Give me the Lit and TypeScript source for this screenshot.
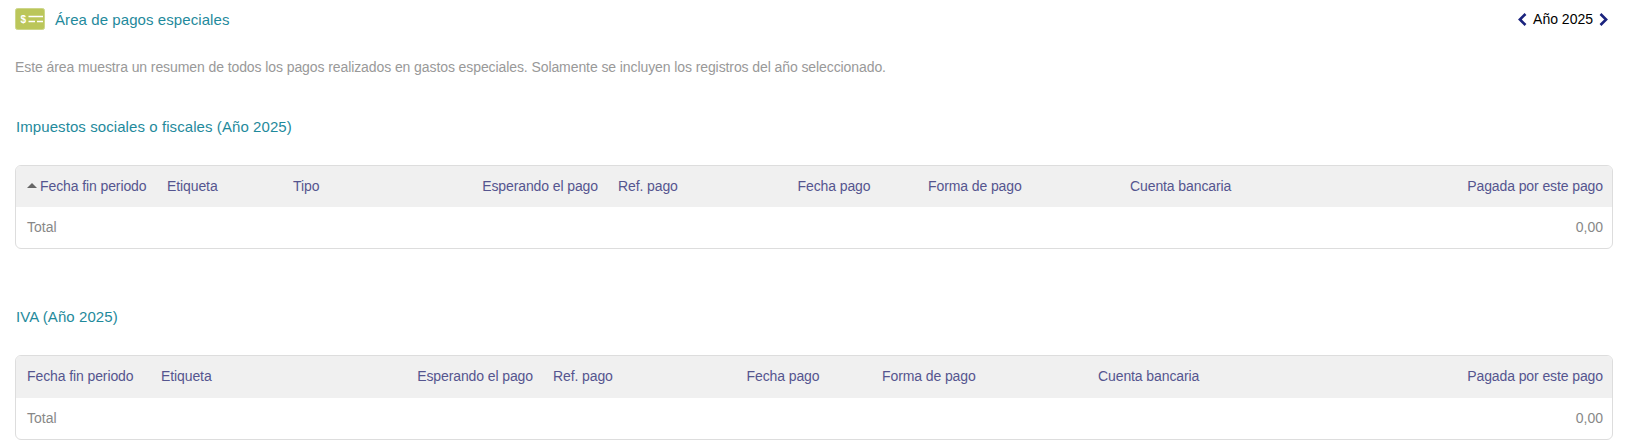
import { LitElement, html, css } from "lit";
import { customElement } from "lit/decorators.js";

type Col = { t: string; w: number; a?: string; sort?: boolean };

const T1: Col[] = [
  { t: "Fecha fin periodo", w: 141, sort: true },
  { t: "Etiqueta", w: 126 },
  { t: "Tipo", w: 120 },
  { t: "Esperando el pago", w: 205, a: "r" },
  { t: "Ref. pago", w: 142 },
  { t: "Fecha pago", w: 168, a: "c" },
  { t: "Forma de pago", w: 202 },
  { t: "Cuenta bancaria", w: 220 },
  { t: "Pagada por este pago", w: 272, a: "r" },
];
const T2: Col[] = [
  { t: "Fecha fin periodo", w: 135 },
  { t: "Etiqueta", w: 235 },
  { t: "Esperando el pago", w: 157, a: "r" },
  { t: "Ref. pago", w: 151 },
  { t: "Fecha pago", w: 178, a: "c" },
  { t: "Forma de pago", w: 216 },
  { t: "Cuenta bancaria", w: 220 },
  { t: "Pagada por este pago", w: 304, a: "r" },
];

@customElement("app-root")
export class AppRoot extends LitElement {
  static styles = css`
    :host { display: block; width: 1627px; height: 447px; overflow: hidden; background: #fff;
      font-family: "Liberation Sans", Arial, sans-serif; font-size: 14px; color: #999; }
    .page { padding: 8px 14px 0 15px; }
    .head { display: flex; align-items: center; justify-content: space-between; height: 22px; }
    .title { display: flex; align-items: center; gap: 10px; color: #1f8a9c; font-size: 15px; letter-spacing: 0.08px; }
    .badge { width: 30px; height: 22px; display: block; }
    .year { display: flex; align-items: center; gap: 6px; color: #000; padding-right: 5px; }
    .year svg { width: 9px; height: 13px; display: block; }
    .desc { margin: 27px 0 0 0; line-height: 20px; color: #999; letter-spacing: -0.09px; }
    h2 { margin: 40px 0 0 1px; font-weight: normal; font-size: 15px; line-height: 20px; color: #1f8a9c; letter-spacing: 0.08px; }
    .wrap { margin-top: 28px; border: 1px solid #ddd; border-radius: 6px; overflow: hidden; width: 1596px; }
    .second h2 { margin-top: 58px; }
    .second th { height: 42px; }
    table { border-collapse: collapse; table-layout: fixed; width: 1596px; }
    th { background: #f0f0f0; font-weight: normal; color: #55558f; height: 41px; padding: 0 10px 2px 10px; box-sizing: border-box; text-align: left; white-space: nowrap; letter-spacing: -0.1px; }
    td { height: 41px; padding: 0 10px 1px 10px; box-sizing: border-box; color: #888; }
    th:first-child, td:first-child { padding-left: 11px; }
    th:last-child, td:last-child { padding-right: 9px; text-align: right; }
    .r { text-align: right; }
    .c { text-align: center; }
    .arrow { display: inline-block; width: 0; height: 0; border-left: 5px solid transparent; border-right: 5px solid transparent; border-bottom: 5px solid #666; margin: 0 3px 2px 0; vertical-align: middle; }
  `;

  private table(cols: Col[]) {
    return html`<div class="wrap"><table>
      <colgroup>${cols.map((c) => html`<col style="width:${c.w}px" />`)}</colgroup>
      <thead><tr>${cols.map(
        (c) => html`<th class=${c.a ?? ""}>${c.sort ? html`<span class="arrow"></span>` : ""}${c.t}</th>`
      )}</tr></thead>
      <tbody><tr>
        <td>Total</td>
        <td colspan=${cols.length - 2}></td>
        <td>0,00</td>
      </tr></tbody>
    </table></div>`;
  }

  render() {
    return html`<div class="page">
      <div class="head">
        <div class="title">
          <svg class="badge" viewBox="0 0 30 22" aria-hidden="true">
            <rect x="0.5" y="0.5" width="29" height="21" rx="2" fill="#bbc65a" stroke="#cdd68a" />
            <text x="5.5" y="14.5" font-family="Liberation Sans" font-weight="bold" font-size="10" fill="#fff">$</text>
            <path d="M13.5 8.5h14.5M13.5 13.5h6.5M22 13.5h6" stroke="#fff" stroke-width="1.3" fill="none" />
          </svg>
          <span>Área de pagos especiales</span>
        </div>
        <div class="year">
          <svg viewBox="0 0 9 13" aria-hidden="true"><path d="M7.5 1 1.9 6.5l5.6 5.5" fill="none" stroke="#1a237e" stroke-width="2.6" /></svg>
          <span>Año 2025</span>
          <svg viewBox="0 0 9 13" aria-hidden="true"><path d="M1.5 1l5.6 5.5-5.6 5.5" fill="none" stroke="#1a237e" stroke-width="2.6" /></svg>
        </div>
      </div>
      <p class="desc">Este área muestra un resumen de todos los pagos realizados en gastos especiales. Solamente se incluyen los registros del año seleccionado.</p>
      <h2>Impuestos sociales o fiscales (Año 2025)</h2>
      ${this.table(T1)}
      <div class="second">
        <h2>IVA (Año 2025)</h2>
        ${this.table(T2)}
      </div>
    </div>`;
  }
}
